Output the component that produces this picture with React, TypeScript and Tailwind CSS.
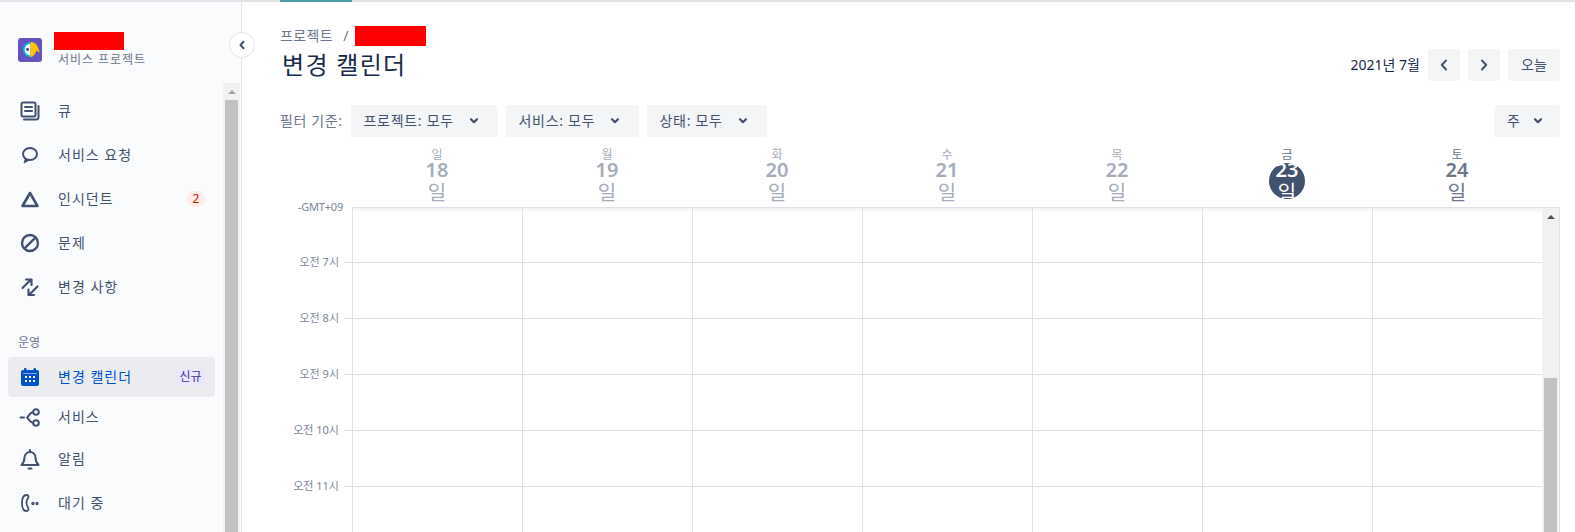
import type { ReactNode } from 'react'

const days = [
  { name: '일', date: 18 },
  { name: '월', date: 19 },
  { name: '화', date: 20 },
  { name: '수', date: 21 },
  { name: '목', date: 22 },
  { name: '금', date: 23, today: true },
  { name: '토', date: 24, upcoming: true },
]

const hours = ['오전 7시', '오전 8시', '오전 9시', '오전 10시', '오전 11시', '']

function Icon({ children, className = 'text-[#42526e]' }: { children: ReactNode; className?: string }) {
  return (
    <svg viewBox="0 0 24 24" fill="none" stroke="currentColor" strokeWidth={2} strokeLinecap="round" strokeLinejoin="round" className={`h-6 w-6 shrink-0 ${className}`}>
      {children}
    </svg>
  )
}

function Chevron() {
  return (
    <svg viewBox="0 0 10 8" className="h-2 w-2.5 text-[#42526e]" fill="none" stroke="currentColor" strokeWidth={2.2} strokeLinecap="round" strokeLinejoin="round">
      <path d="M2 2.2 5 5.2 8 2.2" />
    </svg>
  )
}

function Logo() {
  return (
    <svg viewBox="0 0 24 24" className="h-6 w-6 shrink-0">
      <rect width="24" height="24" rx="3" fill="#6554c0" />
      <path d="M12.5 4a7.6 7.6 0 0 0 0 15.2z" fill="#00b8d9" />
      <path d="M12.5 5.8a5.8 5.8 0 0 0 0 11.6z" fill="#fff" />
      <circle cx="9.5" cy="11.5" r="1.4" fill="#403294" />
      <path d="M12.5 4c4 0 6.2 2.2 7.2 5l2.3 5.5-3.8-1.8c-.6 3.2-2.8 5.8-5.7 6.500z" fill="#ffc400" />
    </svg>
  )
}

const QueueIcon = () => (
  <Icon>
    <rect x="3.5" y="3.5" width="14" height="14" rx="1.5" />
    <path d="M7 8h7M7 12h7M20.5 7v11a2.5 2.5 0 0 1-2.5 2.5H6" />
  </Icon>
)
const RequestIcon = () => (
  <Icon>
    <ellipse cx="12" cy="11" rx="7" ry="6" />
    <path d="M7.5 15.5 6 20l5.5-3" fill="currentColor" strokeWidth={1} />
  </Icon>
)
const IncidentIcon = () => (
  <Icon>
    <path d="M12 6 19.5 19h-15z" strokeWidth={2.6} />
  </Icon>
)
const ProblemIcon = () => (
  <Icon>
    <circle cx="12" cy="12" r="8" strokeWidth={2.4} />
    <path d="M6.8 17.2 17.2 6.8" strokeWidth={2.4} />
  </Icon>
)
const ChangeIcon = () => (
  <Icon>
    <path d="M4.5 13 13 4.5M8 4.5h5.5V10M19.5 11.5 11 20M16 20h-5.5v-5.5" strokeWidth={2.2} />
  </Icon>
)
const CalendarIcon = () => (
  <svg viewBox="0 0 24 24" className="h-6 w-6 shrink-0">
    <rect x="3" y="5" width="18" height="16" rx="2" fill="#0052cc" />
    <rect x="6" y="3" width="2.5" height="4" rx="1" fill="#0052cc" />
    <rect x="15.5" y="3" width="2.5" height="4" rx="1" fill="#0052cc" />
    <g fill="#fff">
      <rect x="5" y="8" width="14" height="1" opacity="0.5" />
      <rect x="7" y="11" width="2" height="2" />
      <rect x="11" y="11" width="2" height="2" />
      <rect x="15" y="11" width="2" height="2" />
      <rect x="7" y="15" width="2" height="2" />
      <rect x="11" y="15" width="2" height="2" />
      <rect x="15" y="15" width="2" height="2" />
    </g>
  </svg>
)
const ServiceIcon = () => (
  <Icon>
    <circle cx="18" cy="7" r="2.8" />
    <circle cx="18" cy="18" r="2.8" />
    <path d="M2.5 12.5h3.5M9 12.5c1.5-1 2-4 6-5.5M9 12.5c1.5 1 2 4 6 5.5" />
  </Icon>
)
const BellIcon = () => (
  <Icon>
    <path d="M12 5a5.5 5.5 0 0 0-5.5 5.5c0 4-1 5.5-3 7.5h17c-2-2-3-3.5-3-7.5A5.5 5.5 0 0 0 12 5zM12 3v2M10.5 21.5h3" />
  </Icon>
)
const OnCallIcon = () => (
  <Icon>
    <path d="M8.5 4C5.5 4 4 6 4 12s1.500 8 4.5 8c1.800 0 2.300-1.500 1.800-2.800S8.800 15 8.500 12s1.300-4 1.800-5.300S10.300 4 8.500 4z" strokeWidth={1.8} />
    <circle cx="15" cy="12.5" r="0.7" />
    <circle cx="19" cy="12.5" r="0.7" />
  </Icon>
)

function NavItem({ icon, label, badge, active, height = 'h-[44px]' }: { icon: ReactNode; label: string; badge?: ReactNode; active?: boolean; height?: string }) {
  return (
    <div className={`flex items-center gap-4 rounded pl-[10px] pr-[10px] ${height} ${active ? 'bg-[#ebecf0] text-[#0052cc]' : 'text-[#42526e]'}`}>
      {icon}
      <span className="flex-1 text-sm tracking-[1px]">{label}</span>
      {badge}
    </div>
  )
}

function Sidebar() {
  return (
    <aside className="relative flex w-[242px] shrink-0 flex-col border-r border-[#e4e6ea] bg-[#fafbfd] pr-px">
      <div className="flex h-[81px] shrink-0 items-start gap-3 pl-[18px]">
        <div className="mt-9"><Logo /></div>
        <div className="pt-[30px]">
          <div className="h-[18px] w-[70px] bg-[#ff0000]" />
          <div className="ml-1 mt-px whitespace-nowrap text-xs leading-[18px] tracking-[0.95px] text-[#6b778c]">서비스 프로젝트</div>
        </div>
      </div>
      <button className="absolute left-[229px] top-[30px] z-10 flex h-[26px] w-[26px] items-center justify-center rounded-full border border-[#e4e6ea] bg-white">
        <svg viewBox="0 0 8 10" className="h-2.5 w-2 text-[#42526e]" fill="none" stroke="currentColor" strokeWidth={2} strokeLinecap="round" strokeLinejoin="round">
          <path d="M5.5 1.8 2.5 5l3 3.2" />
        </svg>
      </button>
      <div className="flex min-h-0 flex-1">
        <nav className="flex-1 px-2 pt-1.5">
          <NavItem icon={<QueueIcon />} label="큐" />
          <NavItem icon={<RequestIcon />} label="서비스 요청" />
          <NavItem
            icon={<IncidentIcon />}
            label="인시던트"
            badge={<span className="flex h-4 w-[18px] items-center justify-center rounded-full bg-[#ffebe6] text-xs text-[#bf2600]">2</span>}
          />
          <NavItem icon={<ProblemIcon />} label="문제" />
          <NavItem icon={<ChangeIcon />} label="변경 사항" />
          <div className="mb-[5px] ml-[10px] mt-[25px] h-[18px] text-xs leading-[18px] text-[#6b778c]">운영</div>
          <NavItem
            active
            height="h-10"
            icon={<CalendarIcon />}
            label="변경 캘린더"
            badge={<span className="flex h-4 w-[29px] items-center justify-center rounded-[3px] bg-[#eae6ff] text-xs text-[#403294]">신규</span>}
          />
          <NavItem height="h-10" icon={<ServiceIcon />} label="서비스" />
          <NavItem icon={<BellIcon />} label="알림" />
          <NavItem icon={<OnCallIcon />} label="대기 중" />
        </nav>
        <div className="flex w-[17px] shrink-0 flex-col bg-[#f1f1f1]">
          <div className="flex h-[17px] items-center justify-center">
            <svg viewBox="0 0 8 4" className="h-1 w-2 fill-[#a3a3a3]"><path d="M4 0 8 4H0z" /></svg>
          </div>
          <div className="mx-0.5 flex-1 bg-[#c1c1c1]" />
        </div>
      </div>
    </aside>
  )
}

function FilterButton({ label, width }: { label: string; width: string }) {
  return (
    <button className={`flex h-8 items-center justify-between rounded-[3px] bg-[#f4f5f7] pl-[13px] pr-[19px] text-sm tracking-[0.7px] text-[#42526e] ${width}`}>
      <span>{label}</span>
      <Chevron />
    </button>
  )
}

function DayHeader({ name, date, today, upcoming }: { name: string; date: number; today?: boolean; upcoming?: boolean }) {
  const nameColor = today || upcoming ? 'text-[#6b778c]' : 'text-[#a5adba]'
  const dateColor = today ? 'text-white' : upcoming ? 'text-[#6b778c]' : 'text-[#a5adba]'
  return (
    <div className="flex flex-col items-center pt-[11px]">
      <div className={`h-3 text-xs leading-[14px] ${nameColor}`}>{name}</div>
      <div className="relative flex flex-col items-center">
        {today && <span className="absolute top-[3px] h-9 w-9 rounded-full bg-[#42526e]" />}
        <div className={`relative text-xl font-semibold leading-[20px] ${dateColor}`}>{date}</div>
        <div className={`relative text-xl leading-[26px] ${dateColor}`}>일</div>
      </div>
    </div>
  )
}

function TimeGutter() {
  return (
    <div className="w-[72px] shrink-0">
      <div className="flex h-0 items-center justify-end pr-[9px] text-[11px] tracking-[-0.2px] text-[#7a869a]">-GMT+09</div>
      {hours.map((hour, i) => (
        <div key={i} className="flex h-14 items-end justify-end">
          {hour && <span className="mb-[-7px] mr-[5px] h-4 text-[11px] leading-4 text-[#7a869a]">{hour}</span>}
          <span className="h-px w-2 bg-[#dfe1e6]" />
        </div>
      ))}
    </div>
  )
}

function WeekGrid() {
  return (
    <div className="flex min-h-0 flex-1">
      <TimeGutter />
      <div className="flex min-w-0 flex-1 border-r border-t border-[#dfe1e6] shadow-[inset_0_6px_6px_-6px_rgba(9,30,66,0.12)]">
        <div className="grid w-[1190px] shrink-0 grid-cols-7">
          {days.map((day) => (
            <div key={day.date} className="border-l border-[#dfe1e6]">
              {hours.map((_, i) => (
                <div key={i} className={`border-b border-[#dfe1e6] ${i === 0 ? 'h-[55px]' : 'h-14'}`} />
              ))}
            </div>
          ))}
        </div>
        <div className="flex w-[17px] shrink-0 flex-col bg-[#f1f1f1]">
          <div className="flex h-[17px] items-center justify-center">
            <svg viewBox="0 0 8 4" className="h-1 w-2 fill-[#505050]"><path d="M4 0 8 4H0z" /></svg>
          </div>
          <div className="h-[153px] shrink-0" />
          <div className="mx-0.5 flex-1 bg-[#c1c1c1]" />
        </div>
      </div>
    </div>
  )
}

export default function App() {
  return (
    <div className="flex h-[532px] w-[1575px] flex-col overflow-hidden bg-white font-['Noto_Sans','Noto_Sans_CJK_KR',sans-serif]">
      <div className="h-0.5 shrink-0 bg-[#e2e4e8]">
        <div className="ml-[280px] h-full w-[72px] bg-[#4f9da6]" />
      </div>
      <div className="flex min-h-0 flex-1">
        <Sidebar />
        <main className="flex min-w-0 flex-1 flex-col pl-[38px] pr-[15px] pt-6">
          <div className="flex h-5 items-center text-sm tracking-[0.4px] text-[#6b778c]">
            <span>프로젝트</span>
            <span className="ml-[10px] mr-[6px]">/</span>
            <span className="h-5 w-[71px] bg-[#ff0000]" />
          </div>
          <div className="mt-[3px] flex h-8 items-center justify-between">
            <h1 className="pl-0.5 text-2xl tracking-[1.3px] text-[#172b4d]">변경 캘린더</h1>
            <div className="flex items-center gap-2">
              <span className="text-sm text-[#172b4d]">2021년 7월</span>
              <button className="flex h-8 w-8 items-center justify-center rounded-[3px] bg-[#f4f5f7] text-[#42526e]">
                <svg viewBox="0 0 12 14" className="h-3.5 w-3" fill="none" stroke="currentColor" strokeWidth={2} strokeLinecap="round" strokeLinejoin="round"><path d="M8 2.5 3.8 7 8 11.5" /></svg>
              </button>
              <button className="flex h-8 w-8 items-center justify-center rounded-[3px] bg-[#f4f5f7] text-[#42526e]">
                <svg viewBox="0 0 12 14" className="h-3.5 w-3" fill="none" stroke="currentColor" strokeWidth={2} strokeLinecap="round" strokeLinejoin="round"><path d="M4 2.5 8.2 7 4 11.5" /></svg>
              </button>
              <button className="flex h-8 w-[52px] items-center justify-center rounded-[3px] bg-[#f4f5f7] text-sm text-[#42526e]">오늘</button>
            </div>
          </div>
          <div className="mt-6 flex h-8 items-center gap-2">
            <span className="text-sm tracking-[0.6px] text-[#6b778c]">필터 기준:</span>
            <FilterButton label="프로젝트: 모두" width="w-[147px]" />
            <FilterButton label="서비스: 모두" width="w-[133px]" />
            <FilterButton label="상태: 모두" width="w-[120px]" />
            <div className="flex-1" />
            <button className="flex h-8 w-[66px] items-center justify-between rounded-[3px] bg-[#f4f5f7] pl-[13px] pr-[17px] text-sm text-[#42526e]">
              <span>주</span>
              <Chevron />
            </button>
          </div>
          <div className="ml-[72px] grid h-[70px] w-[1190px] shrink-0 grid-cols-7">
            {days.map((day) => (
              <DayHeader key={day.date} {...day} />
            ))}
          </div>
          <WeekGrid />
        </main>
      </div>
    </div>
  )
}
